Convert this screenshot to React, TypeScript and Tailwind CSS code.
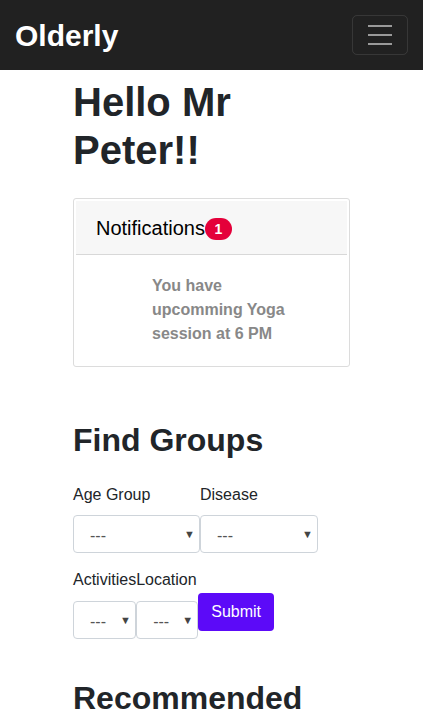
function Select({ w }: { w: string }) {
  return (
    <div className={`relative h-[38px] ${w} rounded-[4px] border border-[#ced4da] bg-white`}>
      <span className="absolute left-[16px] top-[8px] text-[16px] text-[#555]">---</span>
      <span className="absolute right-[4px] top-[10px] text-[11px] text-[#444]">▼</span>
    </div>
  );
}

export default function App() {
  return (
    <div className="min-h-[715px] bg-white font-['Liberation_Sans',Arial,sans-serif] text-[#212529]">
      <nav className="flex h-[70px] items-center justify-between bg-[#212121] pl-[15px] pr-[15px]">
        <div className="text-[30px] font-bold text-white">Olderly</div>
        <button className="flex h-[40px] w-[56px] flex-col items-center justify-center gap-[7px] rounded-[5px] border border-white/10">
          <span className="block h-[2px] w-[24px] bg-[#9a9a9a]" />
          <span className="block h-[2px] w-[24px] bg-[#9a9a9a]" />
          <span className="block h-[2px] w-[24px] bg-[#9a9a9a]" />
        </button>
      </nav>

      <main className="mx-[73px] w-[277px]">
        <h1 className="mt-[8px] text-[40px] font-bold leading-[48px]">Hello Mr Peter!!</h1>

        <div className="mt-[24px] rounded-[3px] border border-[#dcdcdc] p-[2px]">
          <div className="flex h-[54px] items-center border-b border-[#d8d8d8] bg-[#f7f7f7] pl-[20px]">
            <span className="text-[20px] text-black">Notifications</span>
            <span className="mt-[3px] flex h-[22px] min-w-[27px] items-center justify-center rounded-full bg-[#e4003a] px-[8px] text-[14px] font-bold text-white">
              1
            </span>
          </div>
          <div className="pb-[18px] pl-[76px] pt-[19px]">
            <p className="w-[150px] text-[16px] font-bold leading-[24px] text-[#888]">
              You have upcomming Yoga session at 6 PM
            </p>
          </div>
        </div>

        <h2 className="mt-[54px] text-[32px] font-bold leading-[38px]">Find Groups</h2>

        <div className="mt-[24px] flex">
          <div>
            <div className="text-[16px] leading-[24px]">Age Group</div>
            <div className="mt-[8px]">
              <Select w="w-[127px]" />
            </div>
          </div>
          <div>
            <div className="text-[16px] leading-[24px]">Disease</div>
            <div className="mt-[8px]">
              <Select w="w-[118px]" />
            </div>
          </div>
        </div>

        <div className="mt-[15px] flex">
          <div>
            <div className="text-[16px] leading-[24px]">Activities</div>
            <div className="mt-[9px]">
              <Select w="w-[63px]" />
            </div>
          </div>
          <div>
            <div className="text-[16px] leading-[24px]">Location</div>
            <div className="mt-[9px]">
              <Select w="w-[62px]" />
            </div>
          </div>
          <div className="pt-[25px]">
            <button className="h-[38px] w-[76px] rounded-[4px] bg-[#5c0af8] text-[16px] text-white">Submit</button>
          </div>
        </div>

        <h2 className="mt-[40px] text-[32px] font-bold leading-[38px]">Recommended</h2>
      </main>
    </div>
  );
}
